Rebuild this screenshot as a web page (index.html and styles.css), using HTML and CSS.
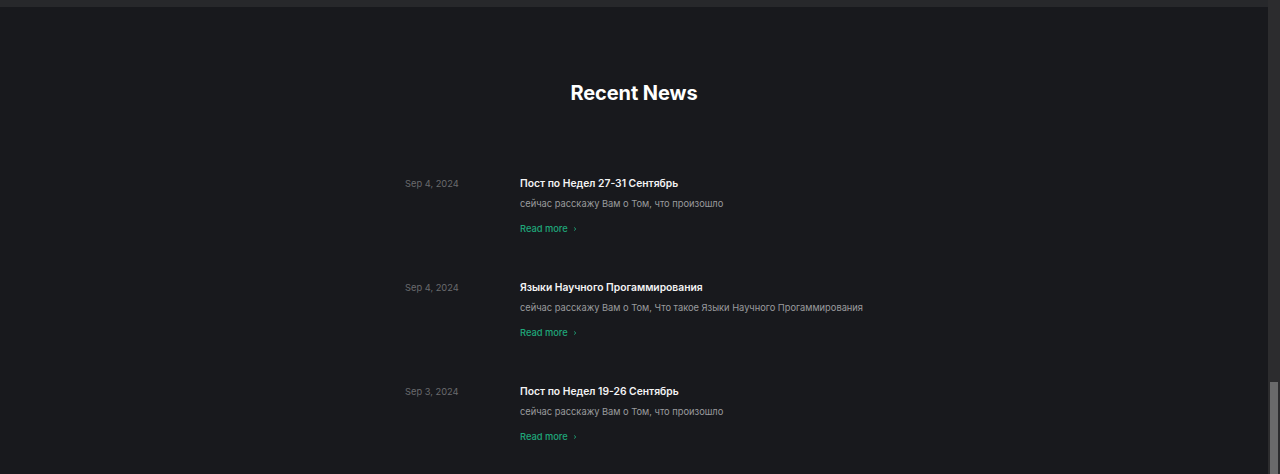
FILE: index.html
```html
<!DOCTYPE html>
<html lang="ru">
<head>
<meta charset="utf-8">
<title>Recent News</title>
<link rel="stylesheet" href="styles.css">
</head>
<body>
<div class="frame">
  <main class="page">
    <div class="topbar"></div>
    <section class="news">
      <h2 class="news-title">Recent News</h2>
      <ul class="news-list">
        <li class="news-item">
          <time class="news-date">Sep 4, 2024</time>
          <div class="news-body">
            <h3 class="item-title">Пост по Недел 27-31 Сентябрь</h3>
            <p class="item-desc">сейчас расскажу Вам о Том, что произошло</p>
            <a class="read-more" href="#">Read more <svg class="chev" viewBox="0 0 6 8" width="6" height="8"><path d="M2.2 2.5 L3.8 4 L2.2 5.5" fill="none" stroke="currentColor" stroke-width="1"/></svg></a>
          </div>
        </li>
        <li class="news-item">
          <time class="news-date">Sep 4, 2024</time>
          <div class="news-body">
            <h3 class="item-title">Языки Научного Прогаммирования</h3>
            <p class="item-desc">сейчас расскажу Вам о Том, Что такое Языки Научного Прогаммирования</p>
            <a class="read-more" href="#">Read more <svg class="chev" viewBox="0 0 6 8" width="6" height="8"><path d="M2.2 2.5 L3.8 4 L2.2 5.5" fill="none" stroke="currentColor" stroke-width="1"/></svg></a>
          </div>
        </li>
        <li class="news-item">
          <time class="news-date">Sep 3, 2024</time>
          <div class="news-body">
            <h3 class="item-title">Пост по Недел 19-26 Сентябрь</h3>
            <p class="item-desc">сейчас расскажу Вам о Том, что произошло</p>
            <a class="read-more" href="#">Read more <svg class="chev" viewBox="0 0 6 8" width="6" height="8"><path d="M2.2 2.5 L3.8 4 L2.2 5.5" fill="none" stroke="currentColor" stroke-width="1"/></svg></a>
          </div>
        </li>
      </ul>
    </section>
  </main>
  <div class="scrollbar"><div class="thumb"></div></div>
</div>
</body>
</html>
```
FILE: styles.css
```css
* { box-sizing: border-box; }
html, body { margin: 0; padding: 0; height: 100%; overflow: hidden; }
body {
  background: #18191d;
  font-family: Inter, "Noto Sans", sans-serif;
  color: #fff;
}
.frame { display: flex; height: 474px; }
.page { flex: 1; display: flex; flex-direction: column; }
.topbar { height: 7px; background: #27282b; flex: none; }
.news { width: 458px; margin: 0 auto; }
.news-title {
  margin: 74px 0 0;
  text-align: center;
  font-size: 20px;
  line-height: 24px;
  font-weight: 700;
  color: #fff;
  letter-spacing: -0.1px;
}
.news-list { list-style: none; margin: 70px 0 0; padding: 0; display: flex; flex-direction: column; gap: 28px; }
.news-item { display: flex; height: 76px; }
.news-date {
  width: 115px;
  flex: none;
  font-size: 9.3px;
  line-height: 16px;
  color: #6a6b6e;
  padding-top: 1px;
}
.news-body { display: flex; flex-direction: column; }
.item-title {
  margin: 0;
  font-size: 10.3px;
  line-height: 16px;
  font-weight: 600;
  color: #f3f3f4;
  white-space: nowrap;
}
.item-desc {
  margin: 5px 0 0;
  font-size: 9.3px;
  line-height: 16px;
  color: #9a9b9e;
  white-space: nowrap;
}
.read-more {
  margin-top: 9px;
  font-size: 9.3px;
  line-height: 16px;
  font-weight: 500;
  color: #1fa77a;
  text-decoration: none;
  display: flex;
  align-items: center;
  gap: 4px;
}
.chev { display: block; }
.scrollbar {
  width: 12px;
  flex: none;
  background: #2c2c2e;
  display: flex;
  flex-direction: column;
  justify-content: flex-end;
  padding: 0 2px;
}
.thumb { height: 92px; background: #6a6a6b; }
```
